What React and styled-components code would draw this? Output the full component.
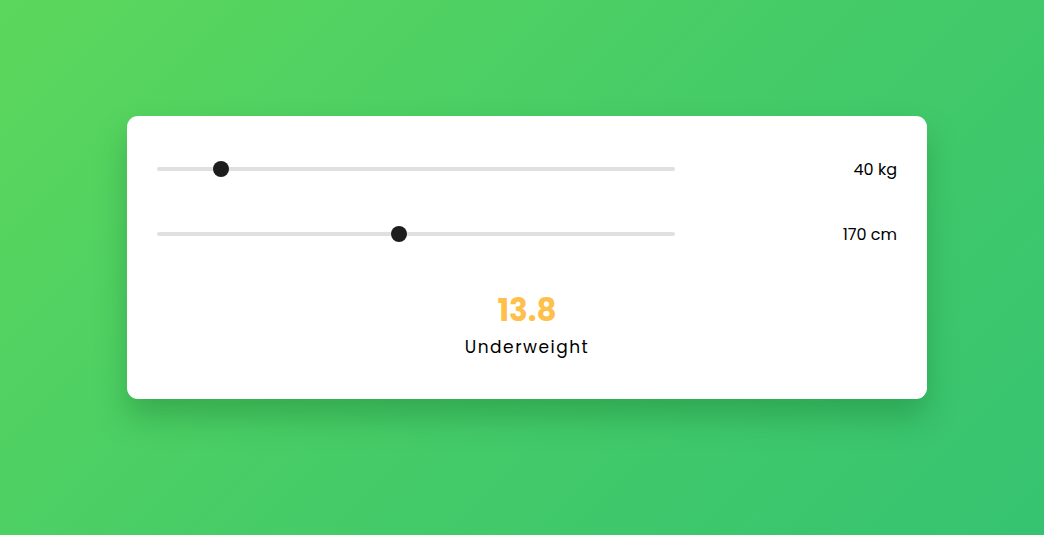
import styled, { createGlobalStyle } from "styled-components";
import { useState } from "react";

const GlobalStyle = createGlobalStyle`
  html, body {
    margin: 0;
    padding: 0;
  }
  body {
    font-family: "Poppins", "Open Sans", "DejaVu Sans", sans-serif;
  }
`;

const Page = styled.div`
  width: 100vw;
  height: 100vh;
  display: flex;
  align-items: center;
  justify-content: center;
  background: linear-gradient(135deg, #5cd75c 0%, #46cc67 50%, #36c371 100%);
  box-sizing: border-box;
  padding: 0 0 20px 10px;
`;

const Card = styled.div`
  width: 800px;
  height: 283px;
  box-sizing: border-box;
  background: #fff;
  border-radius: 11px;
  padding: 41px 30px 0;
  box-shadow: 0 18px 30px rgba(20, 110, 40, 0.35);
  display: flex;
  flex-direction: column;
`;

const Row = styled.div`
  display: flex;
  align-items: center;
  justify-content: space-between;
  height: 24px;
  margin-bottom: 41px;
`;

const Range = styled.input.attrs({ type: "range" })`
  -webkit-appearance: none;
  appearance: none;
  width: 70%;
  height: 4px;
  margin: 0;
  border-radius: 2px;
  background: #e0e0e0;
  outline: none;

  &::-webkit-slider-thumb {
    -webkit-appearance: none;
    width: 16px;
    height: 16px;
    border-radius: 50%;
    background: #1d1d1d;
    cursor: pointer;
  }
  &::-moz-range-thumb {
    width: 16px;
    height: 16px;
    border: none;
    border-radius: 50%;
    background: #1d1d1d;
  }
`;

const Value = styled.span`
  font-size: 16px;
  color: #000;
`;

const Result = styled.div`
  display: flex;
  flex-direction: column;
  align-items: center;
  margin-top: 3px;
`;

const Bmi = styled.div`
  font-size: 31px;
  font-weight: 700;
  color: #ffbf4b;
  line-height: 40px;
`;

const Status = styled.div`
  font-size: 17px;
  font-weight: 400;
  color: #000;
  letter-spacing: 1.5px;
  margin-top: 4px;
`;

function status(bmi) {
  if (bmi < 18.5) return "Underweight";
  if (bmi < 25) return "Normal";
  if (bmi < 30) return "Overweight";
  return "Obese";
}

export default function App() {
  const [weight, setWeight] = useState(40);
  const [height, setHeight] = useState(170);
  const bmi = (weight / ((height / 100) * (height / 100))).toFixed(1);

  return (
    <Page>
      <GlobalStyle />
      <Card>
        <Row>
          <Range min={30} max={120} value={weight} onChange={e => setWeight(+e.target.value)} />
          <Value>{weight} kg</Value>
        </Row>
        <Row>
          <Range min={100} max={250} value={height} onChange={e => setHeight(+e.target.value)} />
          <Value>{height} cm</Value>
        </Row>
        <Result>
          <Bmi>{bmi}</Bmi>
          <Status>{status(+bmi)}</Status>
        </Result>
      </Card>
    </Page>
  );
}
